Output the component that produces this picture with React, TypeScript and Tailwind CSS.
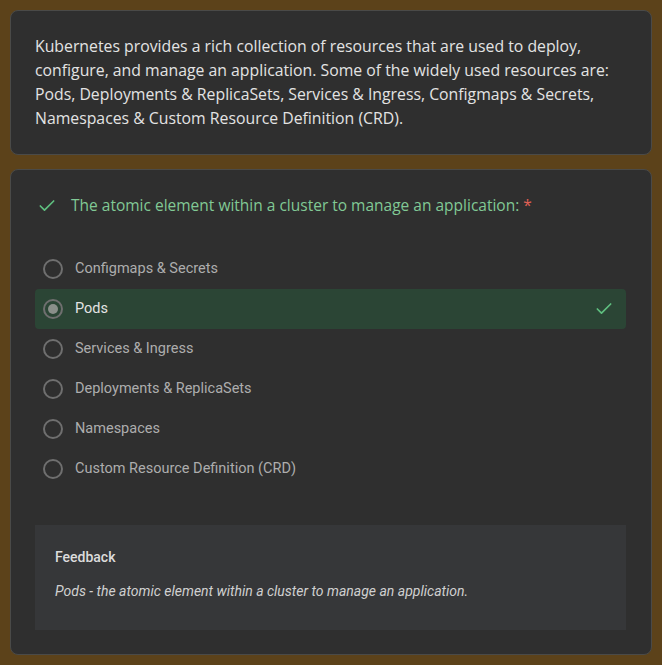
import { Check } from 'lucide-react'

const OPTIONS = [
  'Configmaps & Secrets',
  'Pods',
  'Services & Ingress',
  'Deployments & ReplicaSets',
  'Namespaces',
  'Custom Resource Definition (CRD)',
]

const CORRECT = 'Pods'

function Radio({ checked }: { checked: boolean }) {
  return (
    <div className="w-5 h-5 rounded-full border-2 border-[#6f6f6f] flex items-center justify-center shrink-0">
      {checked && <div className="w-[10px] h-[10px] rounded-full bg-[#8a8f8a]" />}
    </div>
  )
}

export default function App() {
  return (
    <div className="min-h-[665px] bg-[#5c421a] px-[10px] pt-[10px] pb-3 flex flex-col gap-[14px]">
      {/* Description card */}
      <div className="bg-[#2f2f2f] border border-[#4a4a48] rounded-lg px-6 pt-[23px] pb-[24px]">
        <p
          className="text-[15.8px] leading-6 text-[#e3e3e3]"
          style={{ fontFamily: '"Open Sans", sans-serif' }}
        >
          Kubernetes provides a rich collection of resources that are used to deploy,
          <br />
          configure, and manage an application. Some of the widely used resources are:
          <br />
          Pods, Deployments &amp; ReplicaSets, Services &amp; Ingress, Configmaps &amp; Secrets,
          <br />
          Namespaces &amp; Custom Resource Definition (CRD).
        </p>
      </div>

      {/* Question card */}
      <div className="bg-[#2f2f2f] border border-[#4a4a48] rounded-lg pl-6 pr-[25px] pt-6 pb-6">
        <div className="flex items-center gap-[14px] h-6 pl-[2px]">
          <Check className="w-5 h-5 text-[#5fbf7f]" strokeWidth={2} />
          <span
            className="text-[15.5px] text-[#81c995]"
            style={{ fontFamily: '"Open Sans", sans-serif' }}
          >
            The atomic element within a cluster to manage an application:{' '}
            <span className="text-[#e06055]">*</span>
          </span>
        </div>

        <div className="mt-[31px] flex flex-col" style={{ fontFamily: 'Roboto, sans-serif' }}>
          {OPTIONS.map(opt => {
            const isCorrect = opt === CORRECT
            return (
              <div
                key={opt}
                className={
                  isCorrect
                    ? 'h-10 flex items-center gap-3 pl-2 pr-3 rounded bg-[#2b4535]'
                    : 'h-10 flex items-center gap-3 pl-2 pr-3'
                }
              >
                <Radio checked={isCorrect} />
                <span
                  className={
                    isCorrect ? 'text-[14.5px] text-[#e3e3e3]' : 'text-[14.5px] text-[#adadad]'
                  }
                >
                  {opt}
                </span>
                {isCorrect && <Check className="ml-auto w-5 h-5 text-[#5fbf7f]" strokeWidth={2} />}
              </div>
            )
          })}
        </div>

        {/* Feedback */}
        <div
          className="mt-[36px] bg-[#363739] px-5 pt-[22px] pb-[29px]"
          style={{ fontFamily: 'Roboto, sans-serif' }}
        >
          <div className="text-sm font-medium text-[#dcdcdc] leading-5">Feedback</div>
          <div className="mt-[14px] text-sm italic text-[#d0d0d0] leading-5">
            Pods - the atomic element within a cluster to manage an application.
          </div>
        </div>
      </div>
    </div>
  )
}
